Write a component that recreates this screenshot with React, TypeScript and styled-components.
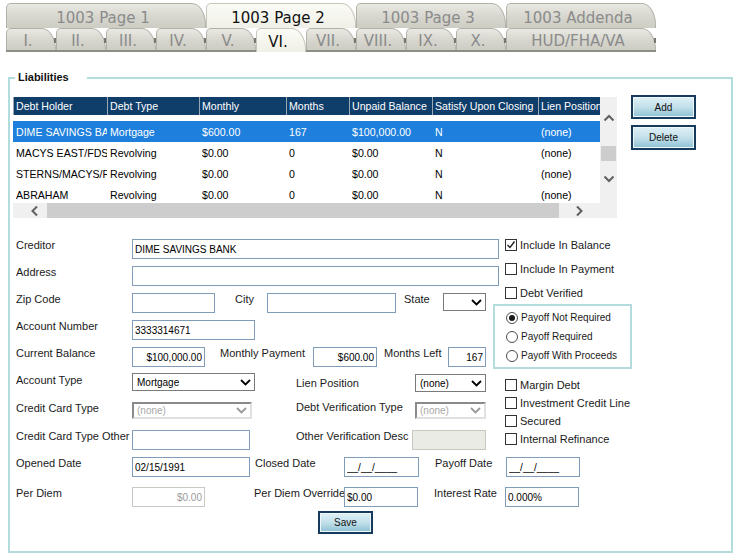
import React from "react";
import styled, { createGlobalStyle } from "styled-components";

const GlobalStyle = createGlobalStyle`
  html, body { margin: 0; padding: 0; background: #ffffff; }
  body { font-family: "Liberation Sans", Arial, sans-serif; font-size: 11px; color: #1a1a1a; }
  * { box-sizing: border-box; }
`;

const Page = styled.div`
  width: 739px;
  height: 559px;
  overflow: hidden;
`;

/* ---------- Tabs ---------- */
const TabStrip = styled.div`
  width: 650px;
  margin: 3px 0 0 6px;
  border-bottom: 2px solid #8e8e86;
  font-family: "DejaVu Sans", Verdana, sans-serif;
  font-size: 15px;
`;

const TabRow = styled.div<{ $h: number }>`
  display: flex;
  height: ${(p) => p.$h}px;
`;

const Tab = styled.div<{ $w: number; $active?: boolean; $sub?: boolean }>`
  position: relative;
  flex: 0 0 ${(p) => p.$w}px;
  height: ${(p) => (p.$active && p.$sub ? "calc(100% + 2px)" : "100%")};
  display: flex;
  align-items: center;
  justify-content: center;
  padding: ${(p) => (p.$sub ? "3px 6px 0 0" : "4px 6px 0 0")};
  line-height: 1;
  color: ${(p) => (p.$active ? "#111111" : "#8b8b8b")};
  background: ${(p) =>
    p.$active
      ? "linear-gradient(#fbfbf6, #f0f0e7)"
      : "linear-gradient(#e9e9e3, #d6d6ce 55%, #cdcdc4)"};
  border: 1px solid ${(p) => (p.$active ? "#c6c6bc" : "#b2b2a9")};
  border-bottom: none;
  border-radius: 5px 14px 0 0 / 5px 22px 0 0;
  white-space: nowrap;
  &::after {
    content: "";
    display: ${(p) => (p.$sub && !p.$active ? "block" : "none")};
    position: absolute;
    right: -1px;
    top: 9px;
    width: 2px;
    height: 5px;
    background: #77776f;
  }
`;

/* ---------- Frame ---------- */
const Frame = styled.fieldset`
  margin: 19px 0 0 8px;
  width: 725px;
  border: 2px solid #b3dcdc;
  padding: 0 0 17px 3px;
  min-width: 0;
`;

const Legend = styled.legend`
  margin-left: 2px;
  padding: 0 18px 0 3px;
  font-weight: bold;
  font-size: 11px;
  line-height: 13px;
  color: #111111;
`;

const TopSection = styled.div`
  display: flex;
  gap: 14px;
  margin-top: 13px;
`;

/* ---------- Grid (table) ---------- */
const GridWrap = styled.div`
  display: grid;
  grid-template-columns: 587px 17px;
  grid-template-rows: 106px 15px;
  width: 604px;
  background: #f0f0f0;
`;

const TableView = styled.div`
  display: flex;
  flex-direction: column;
  overflow: hidden;
  background: #ffffff;
`;

const HeaderRow = styled.div`
  display: flex;
  flex: 0 0 18px;
  height: 18px;
  background: #0f3e6b;
`;

const HeadCell = styled.div<{ $w: number }>`
  flex: 0 0 ${(p) => p.$w}px;
  border-left: 1px solid #9ba7b3;
  padding-left: 2px;
  color: #ffffff;
  font-size: 10.6px;
  line-height: 18px;
  white-space: nowrap;
  overflow: hidden;
`;

const BodyView = styled.div`
  flex: 1;
  overflow: hidden;
  padding-top: 6px;
`;

const DataRow = styled.div<{ $sel?: boolean }>`
  display: flex;
  align-items: center;
  height: 21px;
  background: ${(p) => (p.$sel ? "#1e7fdc" : "#ffffff")};
  color: ${(p) => (p.$sel ? "#ffffff" : "#000000")};
`;

const Cell = styled.div<{ $w: number }>`
  flex: 0 0 ${(p) => p.$w}px;
  width: ${(p) => p.$w}px;
  padding-left: 3px;
  font-size: 10.6px;
  white-space: nowrap;
  overflow: hidden;
`;

const HScroll = styled.div`
  display: flex;
  align-items: stretch;
  background: #f0f0f0;
`;

const ArrowBtn = styled.div<{ $w: number; $h: number; $justify?: string; $pr?: number }>`
  flex: 0 0 ${(p) => p.$w}px;
  width: ${(p) => p.$w}px;
  height: ${(p) => p.$h}px;
  display: flex;
  align-items: center;
  justify-content: ${(p) => p.$justify ?? "center"};
  padding-right: ${(p) => p.$pr ?? 0}px;
`;

const HThumb = styled.div`
  flex: 0 0 512px;
  background: #cdcdcd;
`;

const VScroll = styled.div`
  display: flex;
  flex-direction: column;
  align-items: center;
  padding-top: 12px;
  background: #f0f0f0;
`;

const VThumb = styled.div`
  width: 15px;
  height: 15px;
  margin: 20px 0 10px;
  background: #cdcdcd;
`;

/* ---------- Buttons ---------- */
const ButtonCol = styled.div`
  display: flex;
  flex-direction: column;
  gap: 6px;
  margin-top: -2px;
`;

const Btn = styled.button<{ $w: number; $h: number }>`
  width: ${(p) => p.$w}px;
  height: ${(p) => p.$h}px;
  padding: 0;
  border: 2px solid #173b5d;
  box-shadow: inset 0 0 0 1px #eef7fa;
  background: linear-gradient(#e0f0f6, #c3e0ea 50%, #8dc1d4);
  font-family: "Liberation Sans", Arial, sans-serif;
  font-size: 10px;
  color: #111111;
`;

/* ---------- Form ---------- */
const FormArea = styled.div`
  padding-left: 3px;
  margin-top: 21px;
`;

const FormSplit = styled.div`
  display: flex;
`;

const LeftCol = styled.div`
  flex: 0 0 477px;
  width: 477px;
`;

const RightCol = styled.div`
  flex: 1;
  display: flex;
  flex-direction: column;
`;

const Row = styled.div<{ $h: number }>`
  display: flex;
  align-items: flex-start;
  height: ${(p) => p.$h}px;
`;

const Label = styled.span<{ $w: number; $pl?: number; $pt?: number }>`
  flex: 0 0 ${(p) => p.$w}px;
  width: ${(p) => p.$w}px;
  padding-left: ${(p) => p.$pl ?? 0}px;
  padding-top: ${(p) => p.$pt ?? 0}px;
  font-size: 11px;
  line-height: 13px;
  white-space: nowrap;
  color: #1a1a1a;
`;

const Field = styled.input<{ $w: number; $right?: boolean; $muted?: boolean; $shaded?: boolean }>`
  flex: 0 0 ${(p) => p.$w}px;
  width: ${(p) => p.$w}px;
  height: 20px;
  margin: 0;
  padding: 0 2px;
  border: 1px solid ${(p) => (p.$muted || p.$shaded ? "#c8c8c0" : "#7f9db9")};
  border-radius: 0;
  background: ${(p) => (p.$shaded ? "#ebebe6" : "#ffffff")};
  font-family: "Liberation Sans", Arial, sans-serif;
  font-size: 10px;
  color: ${(p) => (p.$muted ? "#9a9a9a" : "#000000")};
  text-align: ${(p) => (p.$right ? "right" : "left")};
  outline: none;
`;

const SelectBox = styled.div<{ $w: number; $disabled?: boolean; $mt?: number }>`
  flex: 0 0 ${(p) => p.$w}px;
  width: ${(p) => p.$w}px;
  height: ${(p) => (p.$disabled ? 17 : 18)}px;
  margin-top: ${(p) => p.$mt ?? 0}px;
  display: flex;
  align-items: center;
  justify-content: space-between;
  padding: 0 3px 0 ${(p) => (p.$disabled ? 3 : 4)}px;
  border-style: solid;
  border-color: ${(p) => (p.$disabled ? "#8a8a8a #e0e0e0 #e0e0e0 #8a8a8a" : "#7a7a7a")};
  border-width: ${(p) => (p.$disabled ? "2px" : "1px")};
  background: #ffffff;
  font-size: 10px;
  color: ${(p) => (p.$disabled ? "#a8a8a8" : "#000000")};
`;

const CheckItem = styled.div<{ $h: number; $gap?: number }>`
  display: flex;
  align-items: center;
  gap: 3px;
  height: ${(p) => p.$h}px;
  margin-bottom: ${(p) => p.$gap ?? 0}px;
  padding-left: 12px;
  font-size: 11px;
  white-space: nowrap;
`;

const Box = styled.span`
  flex: 0 0 12px;
  width: 12px;
  height: 12px;
  display: flex;
  align-items: center;
  justify-content: center;
  border: 1px solid #333333;
  background: #ffffff;
`;

const PayoffBox = styled.div`
  width: 139px;
  height: 65px;
  margin: 5px 0 7px;
  padding: 2px 0 0 11px;
  border: 2px solid #b3dcdc;
`;

const RadioItem = styled.div`
  display: flex;
  align-items: center;
  gap: 3px;
  height: 19px;
  font-size: 10px;
  white-space: nowrap;
`;

const RadioDot = styled.span<{ $on?: boolean }>`
  flex: 0 0 12px;
  width: 12px;
  height: 12px;
  display: flex;
  align-items: center;
  justify-content: center;
  border-radius: 50%;
  border: 1px solid #4d4d4d;
  background: #ffffff;
  &::after {
    content: "";
    width: 6px;
    height: 6px;
    border-radius: 50%;
    background: ${(p) => (p.$on ? "#1a1a1a" : "transparent")};
  }
`;

const SaveRow = styled.div`
  display: flex;
  padding-left: 302px;
`;

/* ---------- Icons ---------- */
const Chevron = ({ dir, color = "#606060" }: { dir: "up" | "down" | "left" | "right"; color?: string }) => {
  const vertical = dir === "up" || dir === "down";
  const w = vertical ? 12 : 9;
  const h = vertical ? 9 : 12;
  const pts =
    dir === "up"
      ? "1.5,7.5 6,3 10.5,7.5"
      : dir === "down"
      ? "1.5,1.5 6,6 10.5,1.5"
      : dir === "left"
      ? "7,1.5 2.5,6 7,10.5"
      : "2,1.5 6.5,6 2,10.5";
  return (
    <svg width={w} height={h} viewBox={`0 0 ${w} ${h}`}>
      <polyline points={pts} fill="none" stroke={color} strokeWidth={2} />
    </svg>
  );
};

const SelectArrow = ({ color = "#000" }: { color?: string }) => (
  <svg width={11} height={7} viewBox="0 0 11 7">
    <polyline points="1,1 5.5,5.5 10,1" fill="none" stroke={color} strokeWidth={1.8} />
  </svg>
);

const Tick = () => (
  <svg width={10} height={10} viewBox="0 0 10 10">
    <polyline points="1.5,5 4,7.5 8.5,1.5" fill="none" stroke="#222" strokeWidth={1.4} />
  </svg>
);

/* ---------- Data ---------- */
const columns = [
  { name: "Debt Holder", w: 94 },
  { name: "Debt Type", w: 92 },
  { name: "Monthly", w: 87 },
  { name: "Months", w: 63 },
  { name: "Unpaid Balance", w: 83 },
  { name: "Satisfy Upon Closing", w: 106 },
  { name: "Lien Position", w: 62 },
];

const rows = [
  { cells: ["DIME SAVINGS BANK", "Mortgage", "$600.00", "167", "$100,000.00", "N", "(none)"], sel: true },
  { cells: ["MACYS EAST/FDSB", "Revolving", "$0.00", "0", "$0.00", "N", "(none)"] },
  { cells: ["STERNS/MACYS/FDSB", "Revolving", "$0.00", "0", "$0.00", "N", "(none)"] },
  { cells: ["ABRAHAM", "Revolving", "$0.00", "0", "$0.00", "N", "(none)"] },
];

const mainTabs = [
  { label: "1003 Page 1", w: 200 },
  { label: "1003 Page 2", w: 150, active: true },
  { label: "1003 Page 3", w: 150 },
  { label: "1003 Addenda", w: 150 },
];

const subTabs = [
  { label: "I.", w: 50 },
  { label: "II.", w: 50 },
  { label: "III.", w: 50 },
  { label: "IV.", w: 50 },
  { label: "V.", w: 50 },
  { label: "VI.", w: 50, active: true },
  { label: "VII.", w: 50 },
  { label: "VIII.", w: 50 },
  { label: "IX.", w: 50 },
  { label: "X.", w: 50 },
  { label: "HUD/FHA/VA", w: 150 },
];

const Check = ({ label, checked, h, gap }: { label: string; checked?: boolean; h: number; gap?: number }) => (
  <CheckItem $h={h} $gap={gap}>
    <Box>{checked ? <Tick /> : null}</Box>
    <span>{label}</span>
  </CheckItem>
);

const Select = ({ w, value, disabled, mt }: { w: number; value: string; disabled?: boolean; mt?: number }) => (
  <SelectBox $w={w} $disabled={disabled} $mt={mt}>
    <span>{value}</span>
    <SelectArrow color={disabled ? "#9a9a9a" : "#000"} />
  </SelectBox>
);

export default function App() {
  return (
    <Page>
      <GlobalStyle />
      <TabStrip>
        <TabRow $h={25}>
          {mainTabs.map((t) => (
            <Tab key={t.label} $w={t.w} $active={t.active}>
              {t.label}
            </Tab>
          ))}
        </TabRow>
        <TabRow $h={22}>
          {subTabs.map((t) => (
            <Tab key={t.label} $w={t.w} $active={t.active} $sub>
              {t.label}
            </Tab>
          ))}
        </TabRow>
      </TabStrip>

      <Frame>
        <Legend>Liabilities</Legend>
        <TopSection>
          <GridWrap>
            <TableView>
              <HeaderRow>
                {columns.map((c) => (
                  <HeadCell key={c.name} $w={c.w}>
                    {c.name}
                  </HeadCell>
                ))}
              </HeaderRow>
              <BodyView>
                {rows.map((r, i) => (
                  <DataRow key={i} $sel={r.sel}>
                    {r.cells.map((v, j) => (
                      <Cell key={j} $w={columns[j].w}>
                        {v}
                      </Cell>
                    ))}
                  </DataRow>
                ))}
              </BodyView>
            </TableView>
            <VScroll>
              <ArrowBtn $w={17} $h={17}>
                <Chevron dir="up" />
              </ArrowBtn>
              <VThumb />
              <ArrowBtn $w={17} $h={17}>
                <Chevron dir="down" />
              </ArrowBtn>
            </VScroll>
            <HScroll>
              <ArrowBtn $w={34} $h={15} $justify="flex-end" $pr={8}>
                <Chevron dir="left" />
              </ArrowBtn>
              <HThumb />
              <ArrowBtn $w={41} $h={15}>
                <Chevron dir="right" />
              </ArrowBtn>
            </HScroll>
          </GridWrap>
          <ButtonCol>
            <Btn $w={65} $h={24}>Add</Btn>
            <Btn $w={65} $h={25}>Delete</Btn>
          </ButtonCol>
        </TopSection>

        <FormArea>
          <FormSplit>
            <LeftCol>
              <Row $h={27}>
                <Label $w={116}>Creditor</Label>
                <Field $w={367} readOnly value="DIME SAVINGS BANK" />
              </Row>
              <Row $h={27}>
                <Label $w={116}>Address</Label>
                <Field $w={367} readOnly value="" />
              </Row>
              <Row $h={27}>
                <Label $w={116}>Zip Code</Label>
                <Field $w={83} readOnly value="" />
                <Label $w={52} $pl={20}>City</Label>
                <Field $w={129} readOnly value="" />
                <Label $w={47} $pl={8}>State</Label>
                <Select w={43} value="" />
              </Row>
              <Row $h={27}>
                <Label $w={116}>Account Number</Label>
                <Field $w={123} readOnly value="3333314671" />
              </Row>
              <Row $h={26}>
                <Label $w={116}>Current Balance</Label>
                <Field $w={73} $right readOnly value="$100,000.00" />
                <Label $w={108} $pl={15}>Monthly Payment</Label>
                <Field $w={64} $right readOnly value="$600.00" />
                <Label $w={71} $pl={7}>Months Left</Label>
                <Field $w={38} $right readOnly value="167" />
              </Row>
              <Row $h={28}>
                <Label $w={116} $pt={1}>Account Type</Label>
                <Select w={123} value="Mortgage" />
                <Label $w={160} $pl={41} $pt={4}>Lien Position</Label>
                <Select w={71} value="(none)" mt={1} />
              </Row>
              <Row $h={29}>
                <Label $w={116} $pt={1}>Credit Card Type</Label>
                <Select w={120} value="(none)" disabled mt={1} />
                <Label $w={163} $pl={44}>Debt Verification Type</Label>
                <Select w={71} value="(none)" disabled mt={1} />
              </Row>
              <Row $h={27}>
                <Label $w={116}>Credit Card Type Other</Label>
                <Field $w={118} readOnly value="" />
                <Label $w={162} $pl={46}>Other Verification Desc</Label>
                <Field $w={74} $shaded readOnly value="" />
              </Row>
            </LeftCol>
            <RightCol>
              <Check label="Include In Balance" checked h={12} gap={12} />
              <Check label="Include In Payment" h={12} gap={12} />
              <Check label="Debt Verified" h={12} />
              <PayoffBox>
                <RadioItem>
                  <RadioDot $on />
                  <span>Payoff Not Required</span>
                </RadioItem>
                <RadioItem>
                  <RadioDot />
                  <span>Payoff Required</span>
                </RadioItem>
                <RadioItem>
                  <RadioDot />
                  <span>Payoff With Proceeds</span>
                </RadioItem>
              </PayoffBox>
              <Check label="Margin Debt" h={18} />
              <Check label="Investment Credit Line" h={18} />
              <Check label="Secured" h={18} />
              <Check label="Internal Refinance" h={18} />
            </RightCol>
          </FormSplit>
          <Row $h={30}>
            <Label $w={116}>Opened Date</Label>
            <Field $w={118} readOnly value="02/15/1991" />
            <Label $w={94} $pl={5}>Closed Date</Label>
            <Field $w={75} readOnly value="__/__/____" />
            <Label $w={87} $pl={16}>Payoff Date</Label>
            <Field $w={74} readOnly value="__/__/____" />
          </Row>
          <Row $h={24}>
            <Label $w={116}>Per Diem</Label>
            <Field $w={73} $right $muted readOnly value="$0.00" />
            <Label $w={139} $pl={49}>Per Diem Override</Label>
            <Field $w={74} readOnly value="$0.00" />
            <Label $w={87} $pl={16}>Interest Rate</Label>
            <Field $w={74} readOnly value="0.000%" />
          </Row>
          <SaveRow>
            <Btn $w={55} $h={23}>Save</Btn>
          </SaveRow>
        </FormArea>
      </Frame>
    </Page>
  );
}
